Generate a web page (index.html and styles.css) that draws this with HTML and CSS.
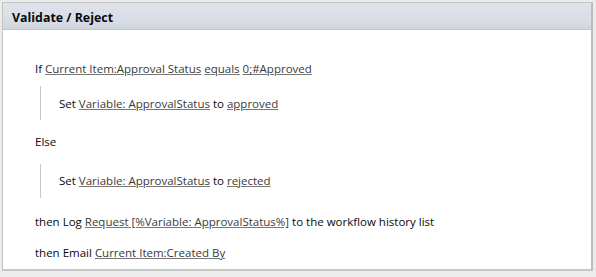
FILE: index.html
```html
<!DOCTYPE html>
<html lang="en">
<head>
  <meta charset="UTF-8">
  <title>Validate / Reject</title>
  <link rel="stylesheet" href="styles.css">
</head>
<body>

  <div class="step">
    <div class="step-header">Validate / Reject</div>

    <div class="step-body">
      <div class="line cond">If <a href="#">Current Item:Approval Status</a> <a href="#">equals</a> <a href="#">0;#Approved</a></div>
      <div class="branch">
        <div class="line">Set <a href="#">Variable: ApprovalStatus</a> to <a href="#">approved</a></div>
      </div>

      <div class="line cond">Else</div>
      <div class="branch else-branch">
        <div class="line">Set <a href="#">Variable: ApprovalStatus</a> to <a href="#">rejected</a></div>
      </div>

      <div class="line action">then Log <a href="#">Request [%Variable: ApprovalStatus%]</a> to the workflow history list</div>
      <div class="line action">then Email <a href="#">Current Item:Created By</a></div>
    </div>
  </div>

</body>
</html>
```

FILE: styles.css
```css
body {
  margin: 0;
  background: #ececec;
  font-family: 'Open Sans', 'Liberation Sans', sans-serif;
  font-size: 11.5px;
  color: #0a0a0a;
}

.step {
  margin: 2px 3px 4px 2px;
  height: 269px;
  box-sizing: border-box;
  background: #fff;
  border: 1px solid #c4c4c4;
  border-right: 2px solid #bdbdbd;
  border-bottom: 2px solid #c8c8c8;
}

.step-header {
  height: 27px;
  box-sizing: border-box;
  padding: 6px 0 0 9px;
  background: linear-gradient(#dfe3ea, #d8dde5 70%, #cfd5de);
  border-bottom: 1px solid #c3c8d0;
  font-weight: bold;
  font-size: 12.4px;
  color: #0a0a0a;
}

.step-body {
  padding: 30px 0 0 32px;
}

.line {
  height: 18px;
  line-height: 18px;
  white-space: nowrap;
}

.line a {
  color: #3a3a3a;
  text-decoration: underline;
  text-decoration-color: #777;
}

.branch {
  margin: 8px 0 13px 5px;
  padding: 9px 0 7px 18px;
  border-left: 1px solid #c9c9c9;
}

.else-branch {
  margin: 13px 0 12px 5px;
  padding: 8px 0 8px 18px;
}

.action {
  margin-top: 15px;
}

.action + .action {
  margin-top: 13px;
}
```
